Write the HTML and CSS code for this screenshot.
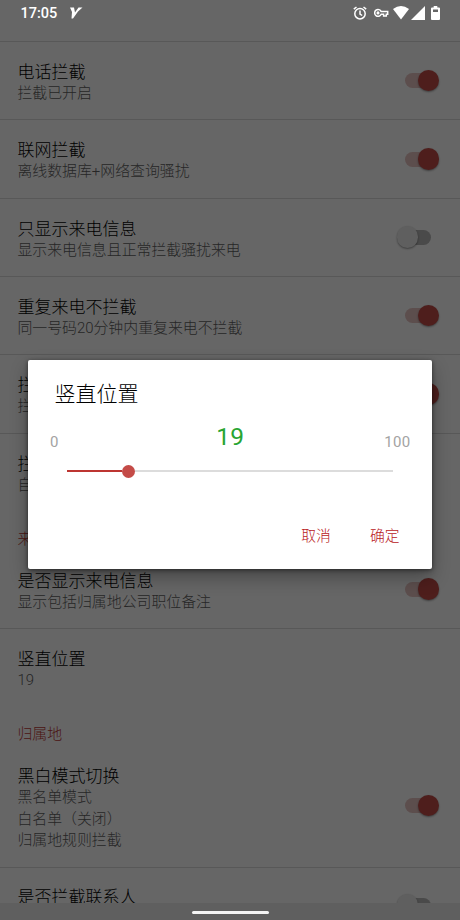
FILE: index.html
```html
<!DOCTYPE html>
<html lang="zh-CN">
<head>
<meta charset="utf-8">
<title>竖直位置</title>
<link rel="stylesheet" href="styles.css">
</head>
<body>
<div class="screen">
  <main class="settings">
    <section class="row"><div class="text"><h2>电话拦截</h2><p>拦截已开启</p></div><span class="switch on"></span></section>
    <section class="row"><div class="text"><h2>联网拦截</h2><p>离线数据库+网络查询骚扰</p></div><span class="switch on"></span></section>
    <section class="row"><div class="text"><h2>只显示来电信息</h2><p>显示来电信息且正常拦截骚扰来电</p></div><span class="switch"></span></section>
    <section class="row"><div class="text"><h2>重复来电不拦截</h2><p>同一号码20分钟内重复来电不拦截</p></div><span class="switch on"></span></section>
    <section class="row"><div class="text"><h2>拦</h2><p>拦</p></div><span class="switch on"></span></section>
    <section class="row"><div class="text"><h2>拦</h2><p>自</p></div></section>
    <h3 class="category">来</h3>
    <section class="row plain"><div class="text"><h2>是否显示来电信息</h2><p>显示包括归属地公司职位备注</p></div><span class="switch on"></span></section>
    <section class="row"><div class="text"><h2>竖直位置</h2><p>19</p></div></section>
    <h3 class="category">归属地</h3>
    <section class="row plain tall"><div class="text"><h2>黑白模式切换</h2><p>黑名单模式<br>白名单（关闭）<br>归属地规则拦截</p></div><span class="switch on"></span></section>
    <section class="row last"><div class="text"><h2>是否拦截联系人</h2></div><span class="switch"></span></section>
  </main>
  <div class="scrim"></div>

  <header class="status">
    <span class="clock">17:05</span>
    <svg class="brand" width="13" height="12" viewBox="0 0 13 12"><path d="M0 0.5H4L5 5.5 8.5 0.5H12.5L8 4.5 3 11.5H1.5L2 5Z"/></svg>
    <div class="indicators">
      <svg width="14" height="14" viewBox="0 0 14 14" class="line"><circle cx="7" cy="7.7" r="5.2"/><path d="M7 4.6V8L9.2 9.5M.8 3.2 3.5 1M13.2 3.2 10.5 1"/></svg>
      <svg width="15" height="10" viewBox="0 0 15 10" class="line key"><path d="M7.2 3.6A3.4 3.4 0 1 0 7.2 6.2H9.6V8H12.3V6.2H13.7V3.6Z"/><circle cx="4" cy="4.9" r=".8"/></svg>
      <svg width="16" height="14" viewBox="0 0 16 14"><path d="M0 3Q8-3 16 3L8 13.5Z"/></svg>
      <svg width="14" height="14" viewBox="0 0 14 14"><path d="M14 0V14H0Z"/></svg>
      <svg width="9" height="14" viewBox="0 0 9 14"><path fill-rule="evenodd" d="M2.7 0H6.3V1.5H8Q9 1.5 9 2.5V13Q9 14 8 14H1Q0 14 0 13V2.5Q0 1.5 1 1.5H2.7ZM2 3.5V6H7V3.5Z"/></svg>
    </div>
  </header>

  <div class="dialog">
    <h1>竖直位置</h1>
    <div class="values"><span class="min">0</span><span class="current">19</span><span class="max">100</span></div>
    <div class="slider"><span class="filled"></span><span class="thumb"></span><span class="rest"></span></div>
    <div class="actions"><span>取消</span><span>确定</span></div>
  </div>
  <footer class="nav"><span></span></footer>
</div>
</body>
</html>
```
FILE: styles.css
```css
* { box-sizing: border-box; }
body { margin: 0; font-family: Roboto, "Noto Sans CJK SC", sans-serif; font-weight: 300; }
h1, h2, h3, p { margin: 0; font-weight: 300; }
.screen { position: relative; width: 460px; height: 920px; overflow: hidden; background: #fff; }
.settings { padding-top: 41px; }
.row { display: flex; align-items: flex-start; justify-content: space-between; height: 78.35px; padding: 20px 20px 0 17.4px; border-top: 1px solid #dcdcdc; white-space: nowrap; }
.row.plain { border-top-color: transparent; }
.row.tall { height: 121.8px; }
.row.last { padding-top: 19px; }
.row h2 { font-size: 17px; line-height: 20px; color: #000; }
.row p { margin-top: 1px; font-size: 14.9px; line-height: 21.6px; color: #606060; }
.category { height: 38.6px; padding: 17px 0 0 17.4px; font-size: 14.9px; line-height: 22px; color: #bc3834; }
.switch { position: relative; width: 36px; height: 22px; margin-top: 8px; }
.row.tall .switch { margin-top: 29px; }
.switch::before { content: ""; position: absolute; left: 0; top: 3.3px; width: 27px; height: 15px; border-radius: 8px; background: #b8b8b8; }
.switch::after { content: ""; position: absolute; left: -7.5px; top: -.3px; width: 21.5px; height: 21.5px; border-radius: 50%; background: #ededed; box-shadow: 0 1px 2px rgba(0,0,0,.4); }
.switch.on::before { left: .5px; background: #e6c2c0; }
.switch.on::after { left: 13.5px; background: #c44b47; }
.scrim { position: absolute; inset: 0; background: rgba(0,0,0,.6); }
.status { position: absolute; inset: 0 0 auto; height: 26px; display: flex; align-items: center; padding: 0 20px 0 20.5px; color: #fff; fill: #fff; }
.clock { width: 38px; padding-top: 1px; font: 500 14.5px/20px Roboto, sans-serif; }
.brand { margin-left: 11px; }
.indicators { display: flex; align-items: center; margin-left: auto; }
.indicators svg + svg { margin-left: 1.5px; }
.indicators .key { margin: 0 3px 0 6.5px !important; }
.indicators svg:last-child { margin-left: 6.5px; }
.line { fill: none; stroke: #fff; stroke-width: 1.5; }
.dialog { position: absolute; left: 28px; top: 360px; width: 404px; height: 209px; border-radius: 2px; background: #fff; box-shadow: 0 8px 18px rgba(0,0,0,.32), 0 1px 4px rgba(0,0,0,.5); }
.dialog h1 { padding: 19px 0 0 26.5px; font-size: 21px; line-height: 30px; color: #000; }
.values { display: grid; grid-template-columns: 60px 1fr 60px; align-items: center; height: 40px; margin-top: 8px; padding: 0 21.5px 0 22px; font-size: 15px; font-weight: 400; letter-spacing: .3px; color: #a3a3a3; }
.values .min, .values .max { padding-top: 10px; }
.current { margin-top: -2px; text-align: center; font-size: 24.5px; color: #28a532; }
.max { text-align: right; }
.slider { display: flex; align-items: center; height: 14px; margin: 7px 39px 0 39px; }
.filled { width: 55px; height: 2px; background: #bd3531; }
.thumb { width: 13px; height: 13px; border-radius: 50%; background: #c44b47; }
.rest { flex: 1; height: 2px; background: #dcdcdc; }
.actions { display: flex; justify-content: flex-end; gap: 39px; padding: 47px 32.5px 0 0; font-size: 14.8px; line-height: 22px; color: #b9201b; }
.nav { position: absolute; left: 0; right: 0; bottom: 0; height: 17px; display: flex; justify-content: center; padding-top: 8px; background: #5f5f5f; }
.nav span { width: 77px; height: 3px; border-radius: 2px; background: #f4f4f4; }
```
